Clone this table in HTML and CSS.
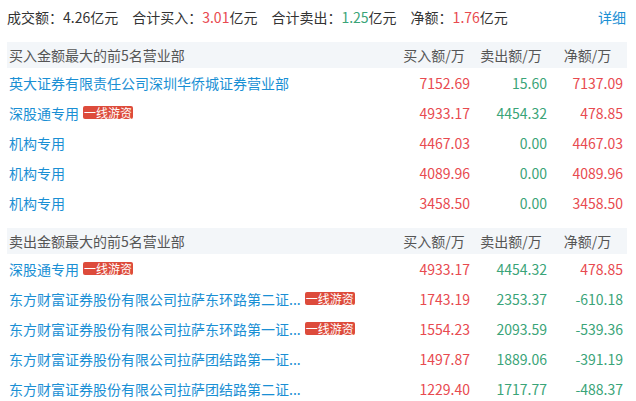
FILE: index.html
```html
<!DOCTYPE html>
<html lang="zh-CN">
<head>
<meta charset="utf-8">
<link rel="stylesheet" href="styles.css">
</head>
<body>
<div class="wrap">
  <div class="summary">
    <div class="stats">
      <span class="stat">成交额：4.26亿元</span>
      <span class="stat">合计买入：<span class="red">3.01</span>亿元</span>
      <span class="stat">合计卖出：<span class="green">1.25</span>亿元</span>
      <span class="stat">净额：<span class="red">1.76</span>亿元</span>
    </div>
    <a class="more">详细</a>
  </div>

  <div class="table">
    <div class="row head">
      <div class="name">买入金额最大的前5名营业部</div>
      <div class="hc">买入额/万</div>
      <div class="hc">卖出额/万</div>
      <div class="hc">净额/万</div>
    </div>
    <div class="row">
      <div class="name"><span class="link">英大证券有限责任公司深圳华侨城证券营业部</span></div>
      <div class="num red">7152.69</div>
      <div class="num green">15.60</div>
      <div class="num red">7137.09</div>
    </div>
    <div class="row">
      <div class="name"><span class="link">深股通专用</span><span class="tag">一线游资</span></div>
      <div class="num red">4933.17</div>
      <div class="num green">4454.32</div>
      <div class="num red">478.85</div>
    </div>
    <div class="row">
      <div class="name"><span class="link">机构专用</span></div>
      <div class="num red">4467.03</div>
      <div class="num green">0.00</div>
      <div class="num red">4467.03</div>
    </div>
    <div class="row">
      <div class="name"><span class="link">机构专用</span></div>
      <div class="num red">4089.96</div>
      <div class="num green">0.00</div>
      <div class="num red">4089.96</div>
    </div>
    <div class="row">
      <div class="name"><span class="link">机构专用</span></div>
      <div class="num red">3458.50</div>
      <div class="num green">0.00</div>
      <div class="num red">3458.50</div>
    </div>
  </div>

  <div class="table second">
    <div class="row head">
      <div class="name">卖出金额最大的前5名营业部</div>
      <div class="hc">买入额/万</div>
      <div class="hc">卖出额/万</div>
      <div class="hc">净额/万</div>
    </div>
    <div class="row">
      <div class="name"><span class="link">深股通专用</span><span class="tag">一线游资</span></div>
      <div class="num red">4933.17</div>
      <div class="num green">4454.32</div>
      <div class="num red">478.85</div>
    </div>
    <div class="row">
      <div class="name"><span class="link">东方财富证券股份有限公司拉萨东环路第二证...</span><span class="tag">一线游资</span></div>
      <div class="num red">1743.19</div>
      <div class="num green">2353.37</div>
      <div class="num green">-610.18</div>
    </div>
    <div class="row">
      <div class="name"><span class="link">东方财富证券股份有限公司拉萨东环路第一证...</span><span class="tag">一线游资</span></div>
      <div class="num red">1554.23</div>
      <div class="num green">2093.59</div>
      <div class="num green">-539.36</div>
    </div>
    <div class="row">
      <div class="name"><span class="link">东方财富证券股份有限公司拉萨团结路第一证...</span></div>
      <div class="num red">1497.87</div>
      <div class="num green">1889.06</div>
      <div class="num green">-391.19</div>
    </div>
    <div class="row">
      <div class="name"><span class="link">东方财富证券股份有限公司拉萨团结路第二证...</span></div>
      <div class="num red">1229.40</div>
      <div class="num green">1717.77</div>
      <div class="num green">-488.37</div>
    </div>
  </div>
</div>
</body>
</html>
```

FILE: styles.css
```css
* { box-sizing: border-box; }
html, body { margin: 0; padding: 0; background: #fff; }
body {
  font-family: "Noto Sans CJK SC", "Noto Sans", "Liberation Sans", sans-serif;
  font-size: 14px;
  color: #333;
}
.wrap {
  width: 636px;
  padding: 0 9px 0 7px;
}
.summary {
  display: flex;
  justify-content: space-between;
  align-items: center;
  height: 34px;
  margin-bottom: 8px;
}
.stats {
  display: flex;
  gap: 14px;
}
.more {
  color: #1a8fd4;
  margin-right: 1px;
}
.red { color: #e84a4f; }
.green { color: #3aa478; }
.table {
  display: flex;
  flex-direction: column;
}
.table.second { margin-top: 10px; }
.row {
  display: grid;
  grid-template-columns: 1fr 77px 77px 76px;
  padding: 0 4px 1px 2px;
  height: 30px;
  align-items: center;
}
.row.head {
  height: 26px;
  background: #f3f6f9;
  color: #555;
}
.hc {
  text-align: center;
  padding-left: 5px;
  white-space: nowrap;
}
.name {
  display: flex;
  align-items: center;
  white-space: nowrap;
  overflow: hidden;
}
.link { color: #1a8fd4; }
.tag {
  margin-left: 4px;
  background: #dd4b3b;
  color: #fff;
  font-size: 12px;
  line-height: 13px;
  padding: 0 1px;
  border-radius: 2px;
}
.num {
  text-align: right;
  white-space: nowrap;
}
```
